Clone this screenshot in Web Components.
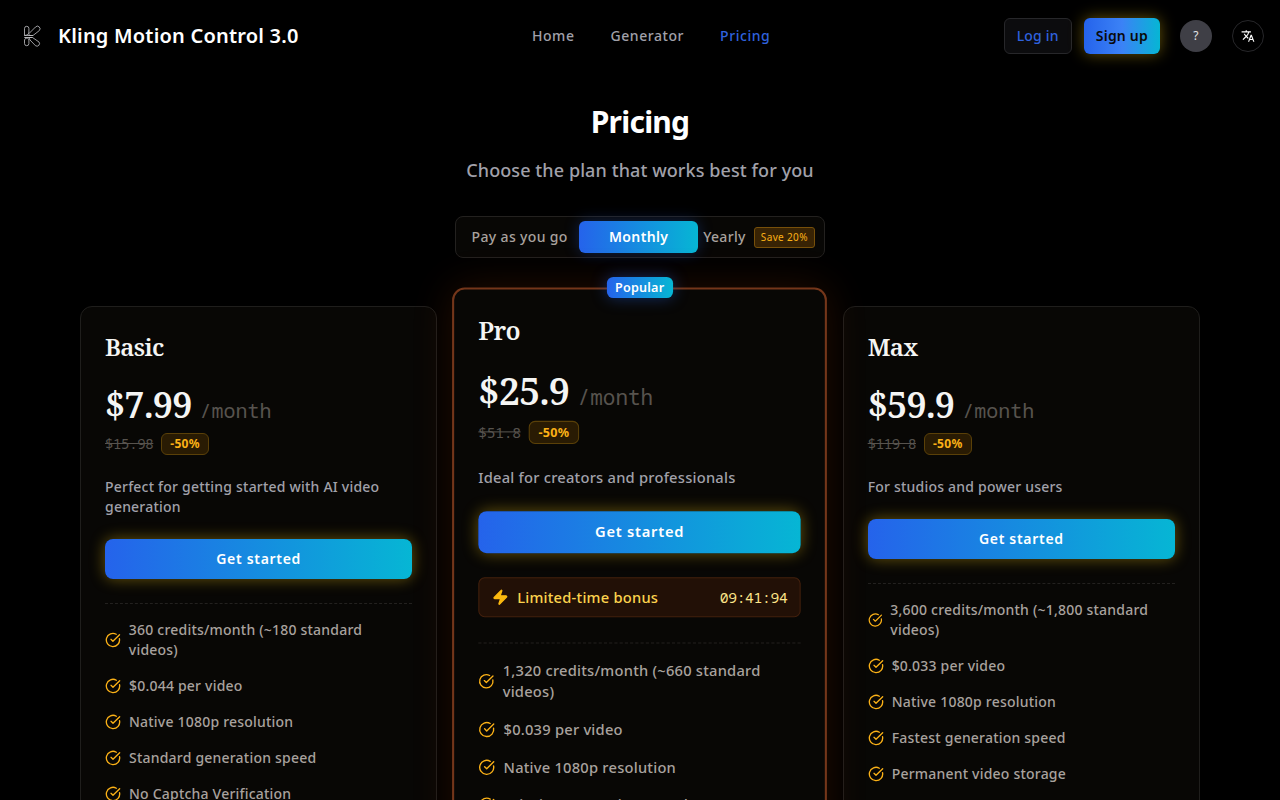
<!DOCTYPE html>
<html lang="en">
<head>
<meta charset="utf-8">
<title>Pricing - Kling Motion Control 3.0</title>
<style>
  :root {
    --bg: #000;
    --text: #f5f5f4;
    --muted: #a1a1aa;
    --soft: #a8a29e;
    --dim: #57534e;
    --amber: #fbb117;
    --blue: #2f62dd;
    --gradient: linear-gradient(to right, #2563eb, #06b6d4);
    --glow: 0 0 15px rgba(250, 204, 21, 0.4);
    --sans: "Noto Sans", sans-serif;
    --serif: "Noto Serif", "DejaVu Serif", serif;
    --mono: "Noto Sans Mono", "DejaVu Sans Mono", monospace;
  }
  body {
    margin: 0;
    background: var(--bg);
    color: var(--text);
    font: 500 14px/20px var(--sans);
    letter-spacing: 0.015em;
  }
</style>
</head>
<body>
<pricing-page></pricing-page>

<script>
class SiteHeader extends HTMLElement {
  constructor() {
    super();
    this.attachShadow({ mode: 'open' });
    this.render();
  }

  render() {
    this.shadowRoot.innerHTML = `
      <style>
        :host { display: block; }
        header {
          display: flex; align-items: center; justify-content: space-between;
          height: 72px; padding: 0 16px; box-sizing: border-box;
        }
        a { text-decoration: none; }
        .brand {
          display: flex; align-items: center; gap: 10px;
          color: #fff; font-size: 20px; line-height: 28px; font-weight: 600;
          white-space: nowrap;
        }
        .brand svg { width: 32px; height: 32px; }
        nav { display: flex; gap: 36px; letter-spacing: 0.04em; }
        nav a { color: var(--muted); }
        nav a[aria-current] { color: var(--blue); }
        .actions { display: flex; align-items: center; }
        button {
          font: inherit; letter-spacing: inherit; cursor: pointer; padding: 0 12px;
          height: 36px; border-radius: 6px; white-space: nowrap;
        }
        .login { color: var(--blue); background: #0c0c0e; border: 1px solid #27272a; margin-right: 12px; }
        .signup {
          color: #0a0a0a; border: 0; font-weight: 600; margin-right: 20px;
          background: linear-gradient(to right, #2563eb, #3b82f6, #06b6d4);
          box-shadow: var(--glow);
        }
        .round {
          width: 32px; height: 32px; padding: 0; border-radius: 50%;
          display: flex; align-items: center; justify-content: center;
          color: #e4e4e7; font-size: 12px; box-sizing: border-box;
        }
        .help { background: #3f3f46; border: 0; margin-right: 20px; font-weight: 400; }
        .lang { background: #000; border: 1px solid #27272a; color: #fff; }
        .lang svg { width: 14px; height: 14px; }
      </style>
      <header>
        <a class="brand" href="#">
          <svg viewBox="0 0 32 32" fill="none" stroke="#c4c4c8" stroke-width=".8" stroke-linejoin="round" aria-hidden="true">
            <path d="M8.500 15.500V8.500a2.200 2.200 0 0 1 4.400 0V12q0 3-4.400 3.500z"/>
            <path d="M8.500 17.500q4.400 0 4.400 2.500v3.500a2.200 2.200 0 0 1-4.400 0V20q0-2 4-2.500"/>
            <path d="M13 15.500v-2L19.500 7a2.600 2.600 0 0 1 3.800 3.600L17 15.500z"/>
            <path d="M13 17.500h3.500l6.500 4.500a2.600 2.600 0 0 1-3.400 3.800L14 20z"/>
            <path d="M8.500 15.500H17M8.500 17.500h8"/>
          </svg>
          <span>Kling Motion Control 3.0</span>
        </a>
        <nav>
          <a href="#home">Home</a>
          <a href="#generator">Generator</a>
          <a href="#pricing" aria-current="page">Pricing</a>
        </nav>
        <div class="actions">
          <button class="login" type="button">Log in</button>
          <button class="signup" type="button">Sign up</button>
          <button class="round help" type="button">?</button>
          <button class="round lang" type="button" aria-label="Language">
            <svg viewBox="0 0 24 24" fill="currentColor" aria-hidden="true">
              <path d="M12.870 15.070l-2.540-2.510.03-.03A17.520 17.520 0 0 0 14.070 6H17V4h-7V2H8v2H1v2h11.170C11.500 7.920 10.440 9.750 9 11.350 8.070 10.320 7.300 9.190 6.690 8h-2c.73 1.630 1.730 3.170 2.980 4.560l-5.090 5.020L4 19l5-5 3.110 3.110.76-2.040zM18.500 10h-2L12 22h2l1.120-3h4.750L21 22h2l-4.500-12zm-2.620 7l1.620-4.330L19.120 17h-3.240z"/>
            </svg>
          </button>
        </div>
      </header>
    `;
  }
}

class BillingToggle extends HTMLElement {
  constructor() {
    super();
    this.attachShadow({ mode: 'open' });
    this.render();
    this.shadowRoot.addEventListener('click', (e) => {
      const btn = e.target.closest('button');
      if (!btn) return;
      this.shadowRoot.querySelectorAll('button').forEach((b) => {
        b.setAttribute('aria-pressed', String(b === btn));
      });
    });
  }

  render() {
    this.shadowRoot.innerHTML = `
      <style>
        :host { display: block; letter-spacing: 0.025em; }
        .group {
          display: flex; padding: 4px; border: 1px solid #23211f;
          border-radius: 8px; background: #080705;
        }
        button {
          display: flex; align-items: center; justify-content: center; gap: 8px;
          height: 32px; min-width: 119px; padding: 0 5px; border: 0; border-radius: 6px;
          background: none; color: var(--soft); font: inherit; letter-spacing: inherit; cursor: pointer;
          white-space: nowrap;
        }
        button[aria-pressed="true"] {
          color: #fff; font-weight: 600; background: var(--gradient);
          box-shadow: 0 0 15px rgba(37, 99, 235, 0.3);
        }
        .save {
          padding: 1px 6px; border: 1px solid #77500a; border-radius: 3px;
          background: #382304; color: var(--amber); font-size: 10px; line-height: 17px;
          font-weight: 400;
        }
      </style>
      <div class="group" role="group" aria-label="Billing period">
        <button type="button" aria-pressed="false">Pay as you go</button>
        <button type="button" aria-pressed="true">Monthly</button>
        <button type="button" aria-pressed="false">Yearly <span class="save">Save 20%</span></button>
      </div>
    `;
  }
}

class PlanFeature extends HTMLElement {
  constructor() {
    super();
    this.attachShadow({ mode: 'open' });
    this.shadowRoot.innerHTML = `
      <style>
        :host { display: flex; align-items: center; gap: 8px; color: var(--soft); }
        svg { width: 16px; height: 16px; color: var(--amber); }
      </style>
      <svg viewBox="0 0 24 24" fill="none" stroke="currentColor" stroke-width="2" stroke-linecap="round" stroke-linejoin="round" aria-hidden="true">
        <path d="M21.801 10A10 10 0 1 1 17 3.335"/><path d="m9 11 3 3L22 4"/>
      </svg>
      <span><slot></slot></span>
    `;
  }
}

class BonusTimer extends HTMLElement {
  constructor() {
    super();
    this.attachShadow({ mode: 'open' });
    this.shadowRoot.innerHTML = `
      <style>
        :host {
          display: flex; align-items: center; gap: 8px; margin-top: 23px; padding: 8px 12px;
          border: 1px solid #43200d; border-radius: 6px; background: #221006;
          color: #fcd34d;
        }
        svg { width: 16px; height: 16px; color: #fbb90f; }
        time { margin-left: auto; color: #fde68a; font-family: var(--mono); font-weight: 400; letter-spacing: -0.025em; }
      </style>
      <svg viewBox="0 0 24 24" fill="currentColor" stroke="currentColor" stroke-width="2" stroke-linejoin="round" aria-hidden="true">
        <path d="M4 14a1 1 0 0 1-.78-1.630l9.900-10.200a.5.5 0 0 1 .86.460l-1.920 6.020A1 1 0 0 0 13 10h7a1 1 0 0 1 .78 1.630l-9.900 10.200a.5.5 0 0 1-.86-.460l1.920-6.020A1 1 0 0 0 11 14z"/>
      </svg>
      <span><slot></slot></span>
      <time>${this.getAttribute('time')}</time>
    `;
  }
}

class PlanCard extends HTMLElement {
  constructor() {
    super();
    this.attachShadow({ mode: 'open' });
    this.render();
  }

  render() {
    const attr = (name) => this.getAttribute(name) || '';
    this.shadowRoot.innerHTML = `
      <style>
        :host {
          display: block; position: relative; box-sizing: border-box; padding: 24px;
          border: 1px solid #1f1e1c; border-radius: 12px; background: #080705;
        }
        :host([featured]) {
          z-index: 1; transform: scale(1.05); border: 2px solid #74361a; padding: 23px;
          box-shadow: 0 0 40px rgba(234, 88, 12, 0.15);
        }
        .badge {
          position: absolute; top: -12px; left: 50%; transform: translateX(-50%);
          padding: 0 8px; border-radius: 6px; background: var(--gradient);
          color: #fff; font-size: 12px; font-weight: 600;
          box-shadow: 0 0 15px rgba(37, 99, 235, 0.4);
        }
        h2 { margin: 0; font: 600 24px/32px var(--serif); letter-spacing: -0.025em; }
        .price {
          display: flex; align-items: baseline; gap: 8px; margin-top: 16px;
          font: 600 36px/52px var(--serif); letter-spacing: -0.025em;
        }
        .price small { color: var(--dim); font: 400 20px/28px var(--mono); letter-spacing: normal; }
        .was { display: flex; align-items: center; gap: 8px; height: 22px; margin-top: 2px; }
        s { color: var(--dim); font-family: var(--mono); font-weight: 400; letter-spacing: -0.025em; }
        .off {
          padding: 0 8px; border: 1px solid #5a4008; border-radius: 6px;
          background: #291b03; color: var(--amber); font-size: 12px; font-weight: 700; letter-spacing: 0.025em;
        }
        p { margin: 22px 0; color: var(--muted); }
        button {
          display: block; width: 100%; height: 40px; border: 0; border-radius: 8px;
          background: var(--gradient); color: #fff; font: inherit; font-weight: 600; letter-spacing: 0.05em;
          cursor: pointer; box-shadow: var(--glow);
        }
        hr { margin: 24px 0 16px; border: 0; border-top: 1px dashed #23211f; }
        .features { display: grid; gap: 16px; }
      </style>
      ${this.hasAttribute('featured') ? '<span class="badge">Popular</span>' : ''}
      <h2>${attr('name')}</h2>
      <div class="price">${attr('price')}<small>/month</small></div>
      <div class="was"><s>${attr('was')}</s><span class="off">-50%</span></div>
      <p>${attr('description')}</p>
      <button type="button">Get started</button>
      <slot name="bonus"></slot>
      <hr>
      <div class="features"><slot></slot></div>
    `;
  }
}

class PricingPage extends HTMLElement {
  constructor() {
    super();
    this.attachShadow({ mode: 'open' });
    this.render();
  }

  render() {
    this.shadowRoot.innerHTML = `
      <style>
        :host { display: block; }
        main {
          display: flex; flex-direction: column; align-items: center;
          max-width: 1120px; margin: 0 auto; padding: 32px 24px 64px;
        }
        h1 { margin: 0; color: #fff; font-size: 30px; line-height: 36px; font-weight: 700; letter-spacing: -0.025em; }
        .lead { margin: 16px 0 32px; color: var(--muted); font-size: 18px; line-height: 28px; letter-spacing: 0.005em; }
        .plans {
          display: grid; grid-template-columns: repeat(3, minmax(0, 1fr)); gap: 24px;
          width: 100%; min-height: 740px; margin-top: 48px;
        }
      </style>
      <site-header></site-header>
      <main>
        <h1>Pricing</h1>
        <p class="lead">Choose the plan that works best for you</p>
        <billing-toggle></billing-toggle>
        <div class="plans">
          <plan-card name="Basic" price="$7.99" was="$15.98" description="Perfect for getting started with AI video generation">
            <plan-feature>360 credits/month (~180 standard videos)</plan-feature>
            <plan-feature>$0.044 per video</plan-feature>
            <plan-feature>Native 1080p resolution</plan-feature>
            <plan-feature>Standard generation speed</plan-feature>
            <plan-feature>No Captcha Verification</plan-feature>
          </plan-card>
          <plan-card featured name="Pro" price="$25.9" was="$51.8" description="Ideal for creators and professionals">
            <bonus-timer slot="bonus" time="09:41:94">Limited-time bonus</bonus-timer>
            <plan-feature>1,320 credits/month (~660 standard videos)</plan-feature>
            <plan-feature>$0.039 per video</plan-feature>
            <plan-feature>Native 1080p resolution</plan-feature>
            <plan-feature>Priority generation speed</plan-feature>
          </plan-card>
          <plan-card name="Max" price="$59.9" was="$119.8" description="For studios and power users">
            <plan-feature>3,600 credits/month (~1,800 standard videos)</plan-feature>
            <plan-feature>$0.033 per video</plan-feature>
            <plan-feature>Native 1080p resolution</plan-feature>
            <plan-feature>Fastest generation speed</plan-feature>
            <plan-feature>Permanent video storage</plan-feature>
          </plan-card>
        </div>
      </main>
    `;
  }
}

customElements.define('site-header', SiteHeader);
customElements.define('billing-toggle', BillingToggle);
customElements.define('plan-feature', PlanFeature);
customElements.define('bonus-timer', BonusTimer);
customElements.define('plan-card', PlanCard);
customElements.define('pricing-page', PricingPage);
</script>
</body>
</html>
